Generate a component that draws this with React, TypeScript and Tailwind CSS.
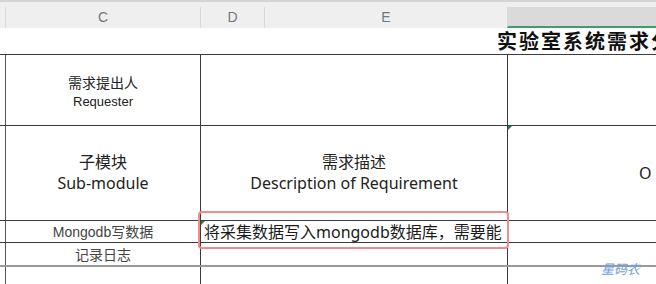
import React from "react";

/* Spreadsheet snippet: column headers, merged title row and a requirements table */

const sans = { fontFamily: '"Noto Sans", "Noto Sans CJK SC", sans-serif' };
const arial = { fontFamily: '"Liberation Sans", "Noto Sans CJK SC", sans-serif' };

function Corner() {
  return (
    <span className="absolute left-0 top-0 h-0 w-0 border-r-[4px] border-t-[4px] border-r-transparent border-t-[#1e7a3f]" />
  );
}

export default function App() {
  return (
    <div className="relative h-[284px] w-[656px] overflow-hidden bg-white text-[#222]">
      {/* column headers */}
      <div className="flex h-[28px] border-t-2 border-[#d4d4d4] bg-[#efefef] pt-[5px]" style={arial}>
        <div className="w-[5px] shrink-0" />
        <div className="flex w-[195px] shrink-0 items-center justify-center border-l border-[#dadada] text-[14px] text-[#6f7782]">
          C
        </div>
        <div className="flex w-[64px] shrink-0 items-center justify-center border-l border-[#dadada] text-[14px] text-[#6f7782]">
          D
        </div>
        <div className="flex w-[243px] shrink-0 items-center justify-center border-l border-[#dadada] text-[14px] text-[#6f7782]">
          E
        </div>
        <div className="flex-1 border-b-2 border-l border-b-[#3d9f6c] border-l-[#dadada] bg-[#dadada]" />
      </div>

      {/* merged title row */}
      <div className="flex h-[26px] items-center overflow-hidden whitespace-nowrap pl-[497px]">
        <span
          className="text-[20px] font-bold leading-none tracking-[2px] text-[#111]"
          style={{ fontFamily: '"Noto Sans CJK SC", serif' }}
        >
          实验室系统需求分析
        </span>
      </div>

      {/* table body */}
      <div className="border-t border-[#3c3c3c]">
        {/* row: requester */}
        <div className="flex h-[70px]">
          <div className="w-[6px] shrink-0 border-r border-[#555]" />
          <div className="flex w-[195px] shrink-0 flex-col items-center justify-center border-r border-[#3c3c3c] pt-[3px] text-[#222]" style={arial}>
            <span className="text-[14px] leading-[19px]" style={sans}>需求提出人</span>
            <span className="text-[13px] leading-[19px]">Requester</span>
          </div>
          <div className="w-[307px] shrink-0 border-r border-[#3c3c3c]" />
          <div className="flex-1" />
        </div>

        {/* row: sub-module / description */}
        <div className="flex h-[95px] border-t border-[#3c3c3c]" style={sans}>
          <div className="w-[6px] shrink-0 border-r border-[#555]" />
          <div className="flex w-[195px] shrink-0 flex-col items-center justify-center border-r border-[#3c3c3c] text-[16px] leading-[21px]">
            <span>子模块</span>
            <span>Sub-module</span>
          </div>
          <div className="flex w-[307px] shrink-0 flex-col items-center justify-center border-r border-[#3c3c3c] text-[16px] leading-[21px]">
            <span>需求描述</span>
            <span>Description of Requirement</span>
          </div>
          <div className="relative flex flex-1 items-center pl-[131px] text-[16px]">
            <Corner />
            O
          </div>
        </div>

        {/* row: mongodb */}
        <div className="flex h-[22px] border-t border-[#3c3c3c]">
          <div className="w-[6px] shrink-0 border-r border-[#555]" />
          <div className="flex w-[195px] shrink-0 items-center justify-center border-r border-[#3c3c3c] pt-[2px] text-[14px] text-[#444]" style={arial}>
            Mongodb写数据
          </div>
          <div className="relative flex w-[307px] shrink-0 items-center whitespace-nowrap border-r border-[#3c3c3c] pl-[3px] text-[16px] text-[#1a1a1a]" style={sans}>
            <Corner />
            将采集数据写入mongodb数据库，需要能
            <span className="absolute -left-[3px] -top-[10px] h-[38px] w-[311px] rounded-[4px] border-2 border-[#f28b8b]" />
          </div>
          <div className="flex-1" />
        </div>

        {/* row: log */}
        <div className="flex h-[23px] border-t border-[#3c3c3c]">
          <div className="w-[6px] shrink-0 border-r border-[#555]" />
          <div className="flex w-[195px] shrink-0 items-center justify-center border-r border-[#3c3c3c] text-[14px] text-[#444]" style={sans}>
            记录日志
          </div>
          <div className="w-[307px] shrink-0 border-r border-[#3c3c3c]" />
          <div className="flex-1" />
        </div>

        {/* empty row */}
        <div className="flex h-[20px] border-t-2 border-[#9a9a9a]">
          <div className="w-[6px] shrink-0 border-r border-[#555]" />
          <div className="w-[195px] shrink-0 border-r border-[#3c3c3c]" />
          <div className="w-[307px] shrink-0 border-r border-[#3c3c3c]" />
          <div className="flex-1" />
        </div>
      </div>

      {/* watermark */}
      <span
        className="absolute left-[601px] top-[259px] text-[13px] italic text-[#6fa0de]"
        style={{ fontFamily: '"Noto Sans CJK SC", sans-serif' }}
      >
        星码农
      </span>
    </div>
  );
}
